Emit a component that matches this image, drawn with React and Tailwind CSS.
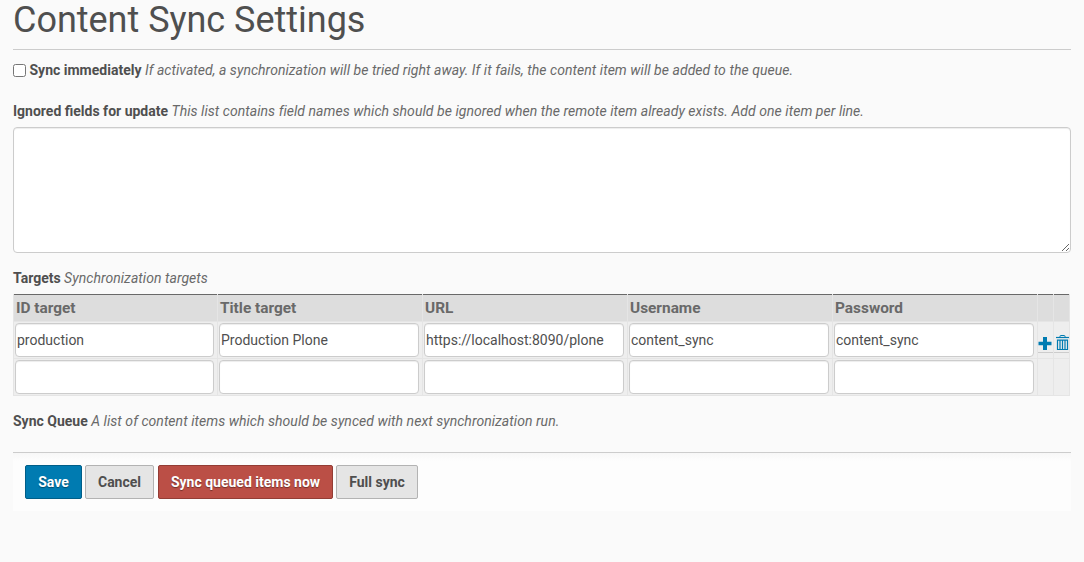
import React from 'react';

const columns = [
  { name: 'ID target', value: 'production' },
  { name: 'Title target', value: 'Production Plone' },
  { name: 'URL', value: 'https://localhost:8090/plone' },
  { name: 'Username', value: 'content_sync' },
  { name: 'Password', value: 'content_sync' },
];

const grid = 'grid grid-cols-[204px_205px_205px_205px_205px_16px_17px]';
const cell = 'border-l border-b border-[#e5e5e5] bg-[#eeeeee]';

function Field({ label, help, className = '' }) {
  return (
    <div className={`text-[14px] leading-5 whitespace-nowrap ${className}`}>
      <span className="font-bold text-[#4f4f4f]">{label}</span>{' '}
      <span className="tracking-[0.046px] italic text-[#696969]">{help}</span>
    </div>
  );
}

function PlusIcon() {
  return (
    <svg className="block h-[13px] w-[14px] shrink-0" viewBox="0 0 14 13" fill="#007bb1">
      <path d="M5 0h4v4.700h4.500v3.600H9V13H5V8.300H.5V4.700H5z" />
    </svg>
  );
}

function TrashIcon() {
  return (
    <svg className="block h-[15px] w-[13px] shrink-0" viewBox="0 0 13 15" fill="none" stroke="#007bb1">
      <path d="M0 2.500H13" strokeWidth="1.200" />
      <path d="M4 2.500V1.200Q4 .5 4.700 .5H8.300Q9 .5 9 1.200V2.500" />
      <path d="M1.500 5.200H11.500V14.500H1.500Z" strokeWidth="1.200" />
      <path d="M4 5V14.500M6.500 5V14.500M9 5V14.500" strokeWidth="1.200" />
    </svg>
  );
}

function Row({ filled }) {
  return (
    <div className={grid}>
      {columns.map((c) => (
        <div key={c.name} className={`${cell} flex h-[37px] pl-px pt-px`}>
          <input
            type="text"
            aria-label={c.name}
            defaultValue={filled ? c.value : ''}
            className="h-[34px] w-[200px] max-w-[calc(100%-3px)] rounded-[4px] border border-[#cccccc] bg-white px-px text-[14px] text-[#4f4f4f] shadow-[inset_0_1px_1px_rgba(0,0,0,0.075)]"
          />
        </div>
      ))}
      <div className={cell}>
        {filled && <button className="flex h-[31px] w-full items-end border-b border-[#cccccc] pb-[2px]" aria-label="Add row"><PlusIcon /></button>}
      </div>
      <div className={`${cell} border-r`}>
        {filled && <button className="flex h-[31px] w-full items-end justify-end border-b border-[#cccccc] pb-[2px]" aria-label="Delete row"><TrashIcon /></button>}
      </div>
    </div>
  );
}

const button = 'h-[34px] rounded-[2px] border text-[14px] font-bold leading-5';
const grey = 'border-[#b3b3b3] bg-[#e5e5e5] text-[#4f4f4f]';

export default function App() {
  return (
    <main className="h-[562px] overflow-hidden bg-[#fafafa] px-[13px] font-[Roboto,sans-serif] text-[#4f4f4f]">
      <h1 className="h-[50px] border-b border-[#cccccc] text-[36px] font-normal leading-10 tracking-[-0.02px] whitespace-nowrap">Content Sync Settings</h1>
      <div className="flex h-5 items-center gap-[3.500px] mt-[10px]">
        <input type="checkbox" aria-label="Sync immediately" className="size-[13px]" />
        <Field label="Sync immediately" help="If activated, a synchronization will be tried right away. If it fails, the content item will be added to the queue." />
      </div>
      <Field className="mt-[21px]" label="Ignored fields for update" help="This list contains field names which should be ignored when the remote item already exists. Add one item per line." />
      <textarea aria-label="Ignored fields for update" className="mt-[6px] block h-[126px] w-full rounded-[4px] border border-[#cccccc] bg-white shadow-[inset_0_1px_1px_rgba(0,0,0,0.075)]" />
      <Field className="mt-[15px]" label="Targets" help="Synchronization targets" />
      <section className="mt-[6px] w-[1057px]">
        <div className={grid}>
          {columns.map((c) => (
            <div key={c.name} className="flex h-7 flex-col border-b border-l border-[#e5e5e5] bg-[#dddddd] text-[15.400px] font-bold leading-[26px] text-[#696969]">
              <div className="h-px shrink-0 bg-[#696969]" />
              <div className="pl-[2px]">{c.name}</div>
            </div>
          ))}
          <div className="border-b border-l border-[#e5e5e5] bg-[#dddddd]"><div className="h-px bg-[#696969]" /></div>
          <div className="border-x border-b border-[#e5e5e5] bg-[#dddddd]"><div className="h-px bg-[#696969]" /></div>
        </div>
        <Row filled />
        <Row />
      </section>
      <Field className="mt-[15px]" label="Sync Queue" help="A list of content items which should be synced with next synchronization run." />
      <footer className="mt-[21px] flex h-[59px] border-t border-[#cccccc] bg-[linear-gradient(#f7f7f7_0px,#fdfdfd_8px)] pl-3 pt-3">
        <button className={`${button} w-[57px] border-[#005e88] bg-[#007bb1] text-white [text-shadow:0_1px_1px_rgba(0,0,0,0.4)]`}>Save</button>
        <button className={`${button} ${grey} ml-[3px] w-[69px]`}>Cancel</button>
        <button className={`${button} ml-1 w-[175px] border-[#933d35] bg-[#bb4f46] text-white [text-shadow:0_1px_1px_rgba(0,0,0,0.4)]`}>Sync queued items now</button>
        <button className={`${button} ${grey} ml-[3px] w-[82px]`}>Full sync</button>
      </footer>
    </main>
  );
}
